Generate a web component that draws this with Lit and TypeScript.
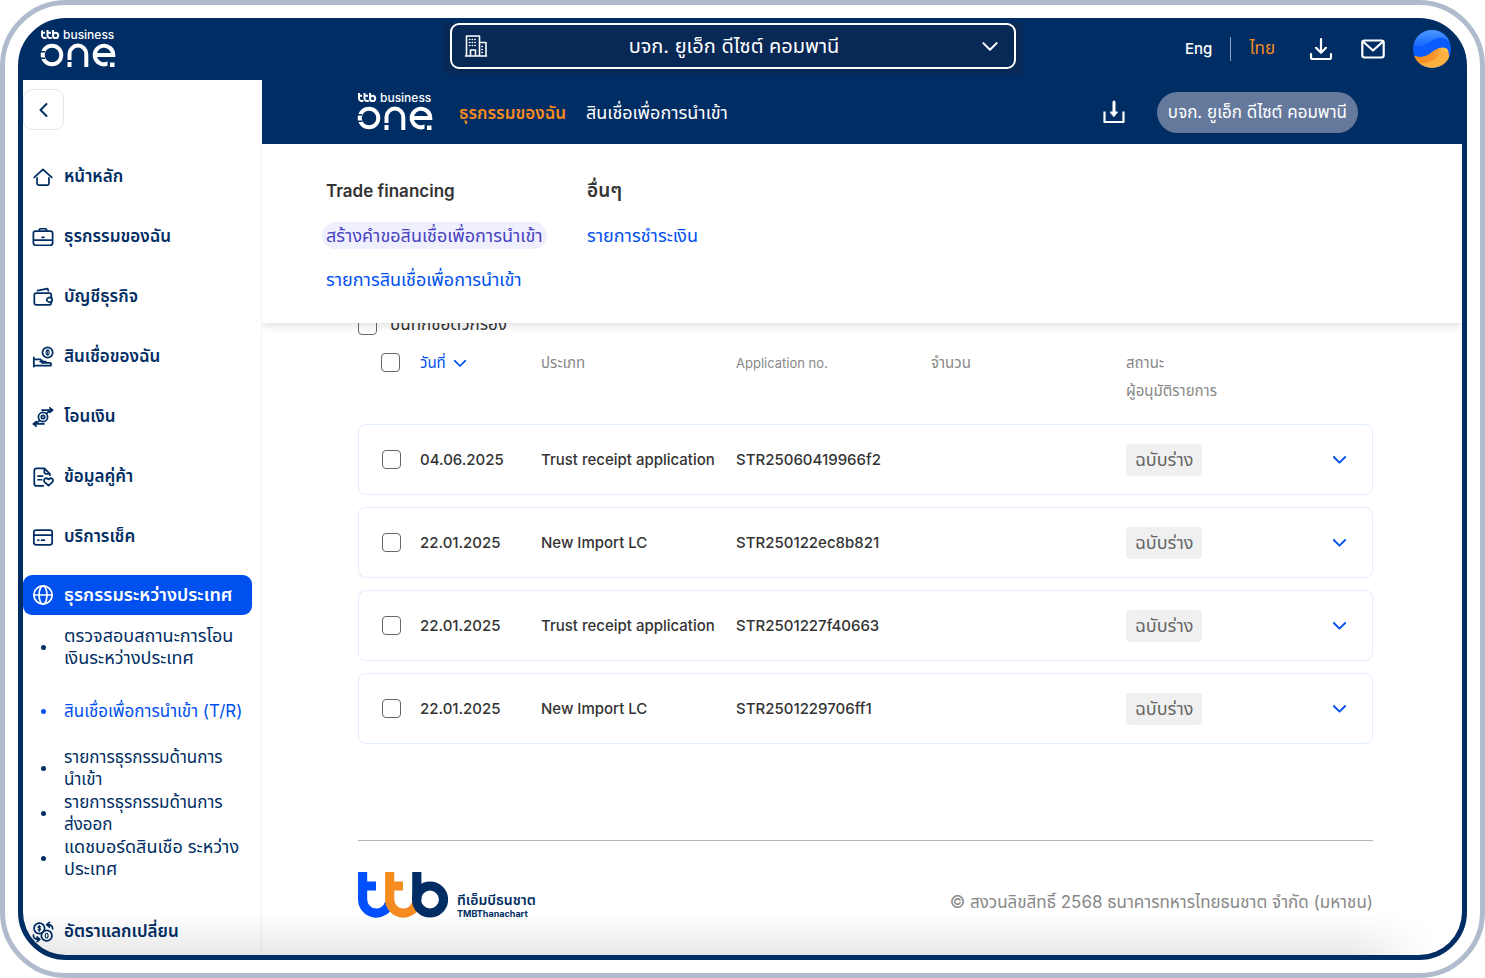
import { LitElement, html, css, svg } from "lit";
import { customElement, property } from "lit/decorators.js";
import { classMap } from "lit/directives/class-map.js";

const icons: Record<string, unknown> = {
  home: svg`<path d="M2.500 12.500 12 3.600l9.500 8.900M5.500 13v6.200c0 1 .6 1.600 1.600 1.600h9.800c1 0 1.600-.6 1.600-1.600V13"/>`,
  briefcase: svg`<rect x="1.500" y="5.500" width="21" height="15.500" rx="2.500"/><path d="M8 5.500V4.300c0-.8.4-1.300 1.300-1.300h5.400c.9 0 1.300.5 1.300 1.300v1.200M2 15.500h20M11 12.300h2"/>`,
  wallet: svg`<path d="M21 12.500V10c0-1.300-.8-2.200-2.200-2.200H4.600C3.300 7.800 2.500 8.700 2.500 10v8.300c0 1.400.8 2.300 2.100 2.300h14.200c1.400 0 2.200-.9 2.200-2.300v-.8M6 5l11-2.200.8 2.500"/><path d="M22 15a2.600 2.600 0 0 1-2.500 2.600c-1.500 0-3.500-1.300-3.500-2.600s2-2.600 3.500-2.600A2.600 2.600 0 0 1 22 15z"/>`,
  loan: svg`<circle cx="17" cy="7" r="5.600"/><ellipse cx="17" cy="7" rx="1.700" ry="2.800" stroke-width="1.200"/><path d="M17 4.500v5" stroke-width="1"/><path d="M2 12.500v10M2 14.500h7l3 2.500h3M9 17h6v1.500M2 21.500h18.500c.8-1.800.3-3-1.500-3h-8"/>`,
  transfer: svg`<circle cx="12" cy="12" r="5"/><circle cx="12" cy="12" r="1.800"/><path d="M11 4.500h11.500M19.500 2l3 2.500-3 2.500M13 19.500H1.500M4.500 17l-3 2.500 3 2.500M16 8l3-3M8 16l-3 3"/>`,
  document: svg`<path d="M19.500 10V8.500L13.500 2.500H5.200C3.600 2.500 2.500 3.500 2.500 5v14c0 1.500 1 2.700 2.700 2.700h7M13.500 2.500v4c0 1.200.8 2 2 2h4M6.500 11h5M6.500 15h4"/><path d="m18 21.500-4.200-4c-2.300-2.500.8-5.900 4.200-2.800 3.400-3.100 6.500.3 4.200 2.800z"/>`,
  card: svg`<rect x="2" y="4.500" width="20" height="16" rx="2.500"/><path d="M2.500 10h19M6.500 15.500h.8M10.500 15.500h3"/>`,
  globe: svg`<circle cx="12" cy="12" r="10"/><ellipse cx="12" cy="12" rx="4.300" ry="10"/><path d="M2 12h20"/>`,
  exchange: svg`<circle cx="8" cy="8" r="5.800"/><circle cx="16" cy="16" r="5.800"/><path d="M9.500 6.500c-.8-1-3-.7-3 .4s3 1 3 2.200-2.200 1.400-3 .3M8 4.700v6.600" stroke-width="1.200"/><ellipse cx="16" cy="16" rx="1.500" ry="2.600" stroke-width="1.200"/><path d="M22.500 8.500c0-3-2-4.500-6-4.500M19 1.500 16 4l3 2.500M1.500 15.500c0 3 2 4.500 6 4.500M5.500 17.500 8.500 20l-3 2.500"/>`,
  back: svg`<path d="m14.500 6-6 6 6 6"/>`,
  chevron: svg`<path d="m4 8.500 8 8 8-8"/>`,
  download: svg`<path d="M12 2v13.500M7 10.800l5 5 5-5M2 17v3.200C2 21.400 2.700 22 3.800 22h16.400c1.100 0 1.800-.6 1.800-1.800V17"/>`,
  downloadSquare: svg`<path d="M2.500 11.500V22h19V11.500" stroke-linecap="butt"/><path d="M12 2v10" stroke-width="3"/><path d="M8.500 12h7L12 16.500z" fill="currentColor" stroke-width="1"/>`,
  mail: svg`<rect x="1.300" y="3.500" width="21.400" height="17" rx="2.200"/><path d="m2.500 5 9.500 8.500L21.500 5"/>`,
  building: svg`<path d="M2.500 22V2h13v20M15.500 8.500h6.500V22M1.500 22h21M6.500 22v-6h5v6"/><path d="M5.500 5.500h8M5.500 8.500h8M5.500 11.500h8M18 12.500h2M18 15.500h2M18 18.500h2" stroke-dasharray=".3 2.400"/>`,
};

@customElement("ui-icon")
class UiIcon extends LitElement {
  @property() name = "";
  static styles = css`
    :host { display: inline-flex; width: 24px; height: 24px; flex: none; }
    svg { width: 100%; height: 100%; fill: none; stroke: currentColor;
      stroke-width: var(--stroke, 1.6); stroke-linecap: round; stroke-linejoin: round; }
  `;
  render() {
    return html`<svg viewBox="0 0 24 24" aria-hidden="true">${icons[this.name]}</svg>`;
  }
}

@customElement("brand-logo")
class BrandLogo extends LitElement {
  static styles = css`
    :host { display: block; width: 76px; height: 46px; flex: none; }
    svg { display: block; overflow: visible; fill: none; stroke: #fff; }
    text { fill: #fff; stroke: none; font: 500 12px Inter, sans-serif; }
    .solid { fill: #fff; stroke: none; }
    .gap { fill: #002d63; stroke: none; }
  `;
  render() {
    return html`<svg width="76" height="46" viewBox="0 -3 76 46" role="img" aria-label="ttb business one">
      <g stroke-width="2">
        <path d="M2 1v5.500a2.800 2.800 0 0 0 4.500 2M1 3.800h4M7.500 1v5.500a2.800 2.800 0 0 0 4.500 2M7 3.800h4M13 1v5.500"/>
        <circle cx="15.600" cy="6.400" r="2.600"/>
      </g>
      <text x="23" y="10">business</text>
      <g stroke-width="4">
        <circle cx="12" cy="26" r="9.300"/>
        <path d="M29.500 38V25a8.400 8.400 0 0 1 16.800 0v13"/>
        <path d="M54 26h19.300a9.300 9.300 0 1 0-4.500 8"/>
      </g>
      <rect class="gap" x="0" y="22" width="5" height="1.500"/>
      <rect class="gap" x="0" y="28.500" width="5" height="1.500"/>
      <rect class="gap" x="27" y="31" width="5" height="2"/>
      <rect class="gap" x="67.500" y="31" width="8" height="8"/>
      <rect class="solid" x="70" y="33.500" width="4.500" height="4.500"/>
    </svg>`;
  }
}

const menu = [
  ["home", "หน้าหลัก"],
  ["briefcase", "ธุรกรรมของฉัน"],
  ["wallet", "บัญชีธุรกิจ"],
  ["loan", "สินเชื่อของฉัน"],
  ["transfer", "โอนเงิน"],
  ["document", "ข้อมูลคู่ค้า"],
  ["card", "บริการเช็ค"],
  ["globe", "ธุรกรรมระหว่างประเทศ"],
];

const submenu = [
  { lines: ["ตรวจสอบสถานะการโอน", "เงินระหว่างประเทศ"], large: true },
  { lines: ["สินเชื่อเพื่อการนำเข้า (T/R)"], current: true },
  { lines: ["รายการธุรกรรมด้านการ", "นำเข้า"] },
  { lines: ["รายการธุรกรรมด้านการ", "ส่งออก"] },
  { lines: ["แดชบอร์ดสินเชือ ระหว่าง", "ประเทศ"], large: true },
];

const rows = [
  ["04.06.2025", "Trust receipt application", "STR25060419966f2"],
  ["22.01.2025", "New Import LC", "STR250122ec8b821"],
  ["22.01.2025", "Trust receipt application", "STR2501227f40663"],
  ["22.01.2025", "New Import LC", "STR2501229706ff1"],
];

@customElement("app-root")
class AppRoot extends LitElement {
  static styles = css`
    :host { display: block; font-family: Inter, "Noto Sans Thai", "Noto Sans", sans-serif; font-size: 17px; color: #333; }
    * { box-sizing: border-box; }
    a { color: inherit; text-decoration: none; }
    button, select { font: inherit; color: inherit; background: none; border: 0; padding: 0; margin: 0; cursor: pointer; }
    .device { display: flex; min-height: 100vh; padding: 13px; border: 5px solid #b0bccd; border-radius: 66px; background: #fff; }
    .screen { position: relative; flex: 1; display: flex; flex-direction: column; min-width: 0; border: 5px solid #002d63; border-radius: 48px; background: #002d63; overflow: hidden; }
    .screen::after { content: ""; position: absolute; inset: auto 0 0 0; height: 42px; pointer-events: none;
      background: linear-gradient(to bottom, transparent, rgba(0, 0, 0, 0.09));
      mask-image: linear-gradient(to right, #000 92%, transparent 98%); }
    .topbar { display: grid; grid-template-columns: 404px 579px 1fr; align-items: center; height: 57px; padding: 0 11px 6px 17px; background: #002d63; color: #fff; }
    .company { padding: 0 7px 5px 6px; background: #082855; }
    .company-box { display: flex; align-items: center; height: 46px; padding: 0 14px 0 12px; border: 2px solid #fff; border-radius: 9px; }
    .company-box select { flex: 1; min-width: 0; height: 40px; appearance: none; text-align: center; text-align-last: center; font-size: 20px; outline: none; }
    .caret { width: 20px; height: 20px; --stroke: 2.4; }
    .tools { display: flex; align-items: center; justify-content: flex-end; }
    .tools .eng { font-size: 15px; font-weight: 500; }
    .tools .sep { width: 1px; height: 24px; margin: 0 18px; background: #8fa3bd; }
    .thai { color: #f68b1f; margin-right: 34px; }
    .tools button { display: flex; margin-right: 28px; --stroke: 2.2; }
    .avatar { width: 38px; height: 38px; }
    .body { flex: 1; display: flex; min-width: 0; background: #fff; }
    .sidebar { flex: none; width: 239px; padding-top: 9px; color: #002d63; border-right: 1px solid #f4f4f4; }
    .collapse { display: flex; align-items: center; justify-content: center; width: 41px; height: 41px; border: 1px solid #e3e9f0; border-radius: 9px; --stroke: 2; }
    .menu { display: flex; flex-direction: column; gap: 20px; margin-top: 25px; }
    .item { display: flex; align-items: center; gap: 10px; height: 40px; padding: 3px 9px 0; font-weight: 600; white-space: nowrap; border-radius: 9px; }
    .item.active { margin-right: 9px; padding-top: 0; background: #0050f0; color: #fff; font-size: 18px; }
    .item ui-icon { width: 22px; height: 22px; --stroke: 1.9; }
    .submenu { list-style: none; margin: 10px 0 30px; padding: 0; }
    .submenu li { display: flex; align-items: center; line-height: 22px; margin-bottom: 1px; white-space: nowrap; }
    .submenu li::before { content: ""; width: 5px; height: 5px; margin: 0 18px; border-radius: 50%; background: currentColor; }
    .submenu .large { font-size: 18px; }
    .submenu .current { margin: 31px 0 24px; color: #0050f0; }
    .main { position: relative; flex: 1; min-width: 0; }
    .subheader { display: flex; align-items: center; height: 64px; padding: 0 104px 0 95px; background: #002d63; color: #fff; white-space: nowrap; }
    .subheader nav { display: flex; align-items: baseline; flex: 1; gap: 20px; margin-left: 26px; padding-top: 2px; font-size: 18px; }
    .subheader nav .on { color: #f68b1f; font-size: 17px; font-weight: 600; }
    .subheader button { display: flex; align-items: center; --stroke: 2.2; }
    .subheader .pill { height: 41px; margin-left: 31px; padding: 2px 11px 0; border-radius: 21px; background: #64799b; }
    .mega { position: absolute; top: 64px; left: 0; right: 0; z-index: 1; display: flex; height: 179px; padding: 34px 64px 0; background: #fff; box-shadow: 0 3px 8px rgba(0, 0, 0, 0.12); clip-path: inset(0 0 -12px 0); }
    .mega section { width: 261px; color: #0050f0; font-size: 18px; white-space: nowrap; }
    .mega h2 { margin: 0 0 18px; font-size: 17px; line-height: 26px; font-weight: 600; color: #333; }
    .mega .big { font-size: 19px; }
    .mega a { display: block; width: max-content; margin: 0 -4px 17px; padding: 0 4px; line-height: 27px; border-radius: 14px; }
    .mega .hover { background: #f0effd; color: #4643c0; }
    .content { padding: 169px 89px 0 96px; }
    .save { display: flex; align-items: center; gap: 13px; height: 24px; white-space: nowrap; }
    input[type="checkbox"] { appearance: none; flex: none; display: block; width: 19px; height: 19px; margin: 0; border: 1px solid #666; border-radius: 4px; background: #fff; }
    table { width: 100%; table-layout: fixed; border-collapse: separate; border-spacing: 0 12px; }
    .c-check { width: 62px; } .c-date { width: 121px; } .c-text { width: 195px; } .c-more { width: 42px; }
    th { padding: 0 0 7px; vertical-align: top; text-align: left; font-size: 15px; font-weight: 400; line-height: 28px; color: #888; white-space: nowrap; }
    th.latin { font-size: 13px; }
    th input { margin: 4px 0 0 23px !important; }
    th button { display: flex; align-items: center; gap: 6px; color: #0050f0; line-height: 28px; }
    th ui-icon { width: 16px; height: 16px; --stroke: 2.6; }
    td { height: 71px; padding: 0; border: solid #e3eefd; border-width: 1px 0; font-size: 15px; font-weight: 500; white-space: nowrap; }
    td:first-child { border-left-width: 1px; border-radius: 8px 0 0 8px; }
    td:last-child { border-right-width: 1px; border-radius: 0 8px 8px 0; }
    td input { margin-left: 23px !important; }
    td button { display: flex; color: #0050f0; }
    td button ui-icon { width: 17px; height: 17px; --stroke: 2.6; }
    .status { display: block; width: max-content; padding: 0 9px; border-radius: 4px; background: #f0f0f0; color: #666; font-size: 18px; font-weight: 400; line-height: 32px; }
    .footer { display: flex; align-items: flex-end; justify-content: space-between; margin-top: 84px; padding: 31px 0; border-top: 1px solid #b5b5b5; color: #888; line-height: 32px; white-space: nowrap; }
    .bank { display: flex; align-items: flex-end; gap: 9px; color: #002d63; font-weight: 600; }
    .bank div { display: flex; flex-direction: column; }
    .bank .th { font-size: 14px; line-height: 18px; }
    .bank .en { font-size: 9px; line-height: 9px; font-weight: 700; }
  `;

  private topbar() {
    return html`<header class="topbar">
      <brand-logo></brand-logo>
      <div class="company"><div class="company-box">
        <ui-icon name="building"></ui-icon>
        <select aria-label="บริษัท"><option>บจก. ยูเอ็ก ดีไซต์ คอมพานี</option></select>
        <ui-icon class="caret" name="chevron"></ui-icon>
      </div></div>
      <div class="tools">
        <a class="eng" href="#en">Eng</a><span class="sep"></span><a class="thai" href="#th">ไทย</a>
        <button aria-label="ดาวน์โหลด"><ui-icon name="download"></ui-icon></button>
        <button aria-label="ข้อความ"><ui-icon name="mail"></ui-icon></button>
        <svg class="avatar" viewBox="0 0 38 38" aria-hidden="true">
          <defs>
            <clipPath id="disc"><circle cx="19" cy="19" r="19"/></clipPath>
            <linearGradient id="gold"><stop offset="0" stop-color="#f68b1f"/><stop offset=".6" stop-color="#f9952a"/><stop offset="1" stop-color="#fcc858"/></linearGradient>
            <linearGradient id="sky" x2="0" y2="1"><stop offset="0" stop-color="#4c9aff"/><stop offset="1" stop-color="#1463ff"/></linearGradient>
          </defs>
          <g clip-path="url(#disc)">
            <path fill="#0a5cff" d="M0 0h38v38H0z"/>
            <path fill="url(#sky)" d="M0 0h36v12c-5-6-12-5-18-1S6 18 1 16z"/>
            <path fill="#fbb03f" d="M1 26c7 2 12 1 17-3s9-6 14-5c2 .5 3 2 3.500 4L38 38H0z"/>
            <path fill="url(#gold)" d="M1 26c7 2 12 1 17-3s9-6 14-5c2 .5 3 2 3 4-6 0-9 5-14 8S9 34 4 32z"/>
          </g>
        </svg>
      </div>
    </header>`;
  }

  private item(icon: string, label: string) {
    return html`<a href="#${icon}" class=${classMap({ item: true, active: icon === "globe" })}><ui-icon name=${icon}></ui-icon>${label}</a>`;
  }

  private sidebar() {
    return html`<aside class="sidebar">
      <button class="collapse" aria-label="ย่อเมนู"><ui-icon name="back"></ui-icon></button>
      <nav>
        <div class="menu">${menu.map(([icon, label]) => this.item(icon, label))}</div>
        <ul class="submenu">
          ${submenu.map(({ lines, current, large }) => html`<li class=${classMap({ current: !!current, large: !!large })}><a href="#sub">${lines.map((line, n) => (n ? html`<br />${line}` : line))}</a></li>`)}
        </ul>
        ${this.item("exchange", "อัตราแลกเปลี่ยน")}
      </nav>
    </aside>`;
  }

  render() {
    return html`<div class="device"><div class="screen">
      ${this.topbar()}
      <div class="body">
        ${this.sidebar()}
        <main class="main">
          <div class="subheader">
            <brand-logo></brand-logo>
            <nav><a class="on" href="#mine">ธุรกรรมของฉัน</a><a href="#import">สินเชื่อเพื่อการนำเข้า</a></nav>
            <button aria-label="ดาวน์โหลด"><ui-icon name="downloadSquare"></ui-icon></button>
            <button class="pill">บจก. ยูเอ็ก ดีไซต์ คอมพานี</button>
          </div>
          <div class="mega">
            <section><h2>Trade financing</h2><a class="hover" href="#new">สร้างคำขอสินเชื่อเพื่อการนำเข้า</a><a href="#list">รายการสินเชื่อเพื่อการนำเข้า</a></section>
            <section><h2 class="big">อื่นๆ</h2><a href="#pay">รายการชำระเงิน</a></section>
          </div>
          <div class="content">
            <label class="save"><input type="checkbox" />บันทึกชื่อตัวกรอง</label>
            <table>
              <colgroup><col class="c-check" /><col class="c-date" /><col class="c-text" /><col class="c-text" /><col class="c-text" /><col /><col class="c-more" /></colgroup>
              <thead><tr>
                <th><input type="checkbox" aria-label="เลือกทั้งหมด" /></th>
                <th><button>วันที่<ui-icon name="chevron"></ui-icon></button></th>
                <th>ประเภท</th><th class="latin">Application no.</th><th>จำนวน</th>
                <th>สถานะ<br />ผู้อนุมัติรายการ</th><th></th>
              </tr></thead>
              <tbody>
                ${rows.map(([date, type, no]) => html`<tr>
                  <td><input type="checkbox" aria-label=${no} /></td>
                  <td>${date}</td><td>${type}</td><td>${no}</td><td></td>
                  <td><span class="status">ฉบับร่าง</span></td>
                  <td><button aria-label="ขยาย"><ui-icon name="chevron"></ui-icon></button></td>
                </tr>`)}
              </tbody>
            </table>
            <footer class="footer">
              <div class="bank">
                <svg width="90" height="46" viewBox="0 0 90 46" fill="none" stroke-width="9.200" role="img" aria-label="ttb">
                  <path stroke="#0050ff" d="M4.600 0v27.500a13.700 13.700 0 0 0 26.900 3.500M4.600 14H18"/>
                  <path stroke="#f68b1f" d="M31.700 0v27.500a13.700 13.700 0 0 0 26.900 3.500M31.700 14H45"/>
                  <path stroke="#002d63" d="M58.800 0v28"/><circle stroke="#002d63" cx="72" cy="27.500" r="13.500"/>
                </svg>
                <div><span class="th">ทีเอ็มบีธนชาต</span><span class="en">TMBThanachart</span></div>
              </div>
              <span>© สงวนลิขสิทธิ์ 2568 ธนาคารทหารไทยธนชาต จำกัด (มหาชน)</span>
            </footer>
          </div>
        </main>
      </div>
    </div></div>`;
  }
}
